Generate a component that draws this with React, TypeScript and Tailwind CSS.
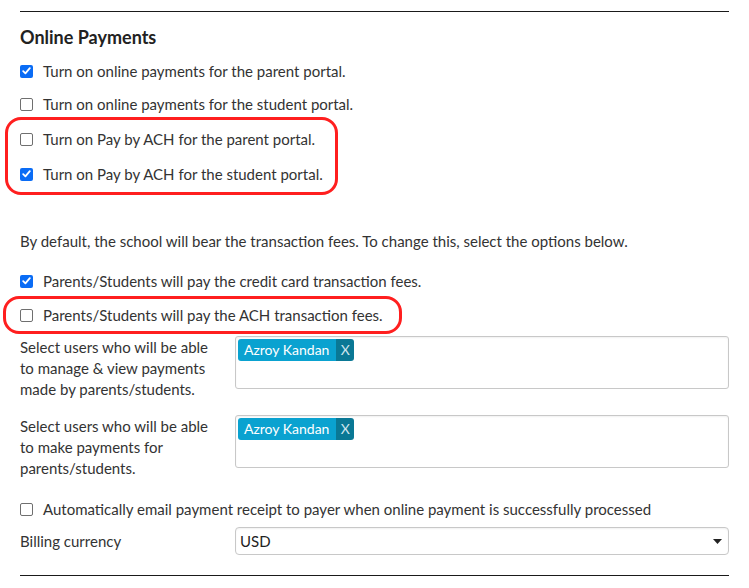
import React from "react";

function Check({ checked }: { checked?: boolean }) {
  if (checked) {
    return (
      <span className="flex h-[13px] w-[13px] shrink-0 items-center justify-center rounded-[2px] bg-[#0a6cf5]">
        <svg width="9" height="8" viewBox="0 0 9 8" fill="none">
          <path d="M1.2 4.2 L3.4 6.3 L7.8 1.2" stroke="white" strokeWidth="1.8" strokeLinecap="round" strokeLinejoin="round" />
        </svg>
      </span>
    );
  }
  return <span className="h-[13px] w-[13px] shrink-0 rounded-[2px] border border-[#6f6f6f] bg-white" />;
}

function Row({ checked, children, className = "" }: { checked?: boolean; children: React.ReactNode; className?: string }) {
  return (
    <div className={`flex h-[20px] items-center gap-[10px] ${className}`}>
      <Check checked={checked} />
      <span className="whitespace-nowrap leading-[20px]">{children}</span>
    </div>
  );
}

function Tag() {
  return (
    <div className="flex h-[22px] w-fit overflow-hidden rounded-[3px] text-[14px] text-white">
      <span className="flex items-center bg-[#0aa2d0] pl-[6px] pr-[7px] leading-[22px]">Azroy Kandan</span>
      <span className="flex w-[18px] items-center justify-center bg-[#0a7895] text-[#cfe6ee] leading-[22px]">X</span>
    </div>
  );
}

function UserGroup({ lines, className = "" }: { lines: string[]; className?: string }) {
  return (
    <div className={`flex items-start ${className}`}>
      <div className="w-[215px] shrink-0 pt-[1px] leading-[21px]">
        {lines.map((l) => (
          <div key={l} className="whitespace-nowrap">{l}</div>
        ))}
      </div>
      <div className="h-[53px] flex-1 rounded-[3px] border border-[#c8c8c8] bg-white p-[2px] shadow-[inset_0_1px_2px_rgba(0,0,0,0.06)]">
        <Tag />
      </div>
    </div>
  );
}

export default function App() {
  return (
    <div
      className="relative h-[588px] w-[749px] overflow-hidden bg-white text-[15px] text-[#333]"
      style={{ fontFamily: "Lato, 'Open Sans', sans-serif" }}
    >
      <div className="px-[20px] pt-[11px]">
        <div className="h-[1px] w-[709px] bg-[#1a1a1a]" />
        <div className="mt-[15px] text-[18px] font-bold leading-[20px] text-[#222]">Online Payments</div>
        <Row checked className="mt-[14px]">Turn on online payments for the parent portal.</Row>
        <Row className="mt-[13px]">Turn on online payments for the student portal.</Row>
        <Row className="mt-[15px]">Turn on Pay by ACH for the parent portal.</Row>
        <Row checked className="mt-[15px]">Turn on Pay by ACH for the student portal.</Row>
        <div className="mt-[47px] whitespace-nowrap leading-[20px]">
          By default, the school will bear the transaction fees. To change this, select the options below.
        </div>
        <Row checked className="mt-[20px]">Parents/Students will pay the credit card transaction fees.</Row>
        <Row className="mt-[14px]">Parents/Students will pay the ACH transaction fees.</Row>
        <UserGroup
          className="mt-[11px]"
          lines={["Select users who will be able", "to manage & view payments", "made by parents/students."]}
        />
        <UserGroup
          className="mt-[15px]"
          lines={["Select users who will be able", "to make payments for", "parents/students."]}
        />
        <Row className="mt-[20px]">
          Automatically email payment receipt to payer when online payment is successfully processed
        </Row>
        <div className="mt-[8px] flex items-center">
          <div className="w-[215px] shrink-0">Billing currency</div>
          <div className="flex h-[28px] flex-1 items-center justify-between rounded-[4px] border border-[#c8c8c8] bg-white pl-[4px] pr-[6px] shadow-[inset_0_1px_2px_rgba(0,0,0,0.06)]">
            <span className="text-[#222]">USD</span>
            <svg width="9" height="5" viewBox="0 0 9 5">
              <path d="M0 0 H9 L4.5 5 Z" fill="#222" />
            </svg>
          </div>
        </div>
        <div className="mt-[20px] h-[1px] w-[709px] bg-[#1a1a1a]" />
      </div>

      <div className="pointer-events-none absolute left-[5px] top-[117px] h-[78px] w-[333px] rounded-[16px] border-[3px] border-[#ff1f1f]" />
      <div className="pointer-events-none absolute left-[3px] top-[296px] h-[38px] w-[399px] rounded-[16px] border-[3px] border-[#ff1f1f]" />
    </div>
  );
}
